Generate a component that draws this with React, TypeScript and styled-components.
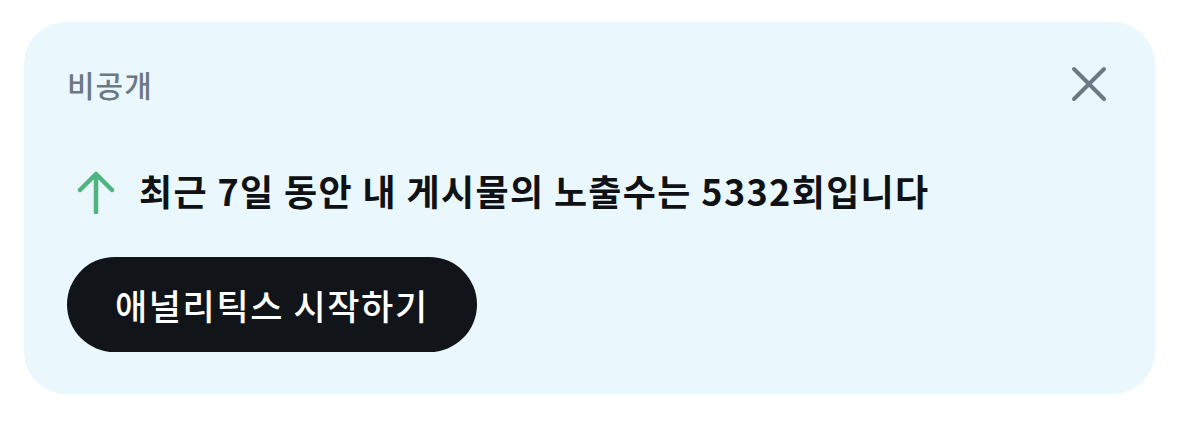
import React from "react";
import styled, { createGlobalStyle } from "styled-components";

const Global = createGlobalStyle`
  html, body { margin: 0; padding: 0; background: #ffffff; }
  body { font-family: "Noto Sans CJK KR", "Noto Sans", sans-serif; }
`;

const Page = styled.div`
  padding: 22px 24px 0 24px;
`;

const Card = styled.section`
  box-sizing: border-box;
  width: 1131px;
  height: 372px;
  background: #eaf8fd;
  border-radius: 42px;
  padding: 38px 46px 0 43px;
  display: flex;
  flex-direction: column;
`;

const Header = styled.div`
  display: flex;
  align-items: center;
  justify-content: space-between;
  height: 48px;
`;

const Label = styled.span`
  font-size: 30px;
  font-weight: 500;
  color: #6c7884;
  line-height: 1;
  letter-spacing: 1px;
`;

const CloseButton = styled.button`
  border: 0;
  background: transparent;
  padding: 0;
  width: 40px;
  height: 40px;
  display: flex;
  align-items: center;
  justify-content: center;
  cursor: pointer;
`;

const Message = styled.div`
  display: flex;
  align-items: center;
  gap: 24px;
  margin-top: 57px;
  padding-left: 10px;
`;

const ArrowIcon = styled.svg`
  flex: none;
  margin-top: 5px;
`;

const MessageText = styled.span`
  font-size: 36px;
  font-weight: 700;
  color: #0f1114;
  line-height: 1;
  letter-spacing: 1.35px;
`;

const ActionButton = styled.button`
  margin-top: 43px;
  align-self: flex-start;
  height: 95px;
  padding: 0 48px;
  border: 0;
  border-radius: 48px;
  background: #111418;
  color: #ffffff;
  font-family: "Noto Sans CJK KR", "Noto Sans", sans-serif;
  font-size: 35px;
  font-weight: 500;
  letter-spacing: 1.6px;
  cursor: pointer;
`;

export default function App() {
  return (
    <>
      <Global />
      <Page>
        <Card>
          <Header>
            <Label>비공개</Label>
            <CloseButton aria-label="닫기">
              <svg width="36" height="36" viewBox="0 0 36 36">
                <path d="M3 3 L33 33 M33 3 L3 33" stroke="#6e7883" strokeWidth="4" strokeLinecap="round" />
              </svg>
            </CloseButton>
          </Header>
          <Message>
            <ArrowIcon width="38" height="44" viewBox="0 0 38 44">
              <path d="M19 42 V4 M3 20 L19 4 L35 20" stroke="#4fb47f" strokeWidth="4.5" fill="none" strokeLinecap="round" strokeLinejoin="round" />
            </ArrowIcon>
            <MessageText>최근 7일 동안 내 게시물의 노출수는 5332회입니다</MessageText>
          </Message>
          <ActionButton>애널리틱스 시작하기</ActionButton>
        </Card>
      </Page>
    </>
  );
}
